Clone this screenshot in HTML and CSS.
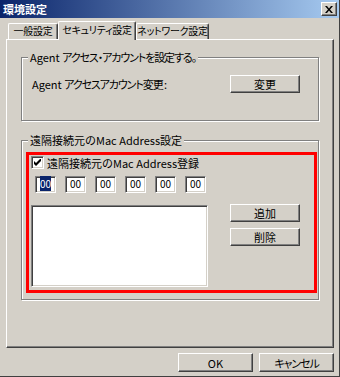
FILE: index.html
```html
<!DOCTYPE html>
<html lang="ja">
<head>
    <meta charset="UTF-8">
    <title>環境設定</title>
    <link rel="stylesheet" href="styles.css">
</head>
<body>
    <div class="window">
        <div class="titlebar">
            <span class="title">環境設定</span>
            <span class="close-btn">
                <svg width="8" height="7" viewBox="0 0 8 7">
                    <path d="M0 0h2l2 2.5L6 0h2L5 3.5 8 7H6L4 4.5 2 7H0l3-3.5z" fill="#000"/>
                </svg>
            </span>
        </div>

        <div class="client">
            <div class="tabs">
                <div class="tab">一般設定</div>
                <div class="tab active">セキュリティ設定</div>
                <div class="tab">ネットワーク設定</div>
            </div>

            <div class="panel">
                <div class="group group-agent">
                    <span class="group-title"><span class="latin">Agent </span><span class="narrow">アクセス・アカウントを設定する。</span></span>
                    <div class="agent-row">
                        <span><span class="latin">Agent </span><span class="narrow">アクセスアカウント変更 :</span></span>
                        <button class="btn btn-change">変更</button>
                    </div>
                </div>

                <div class="group group-mac">
                    <span class="group-title">遠隔接続元のMac Address設定</span>
                    <div class="highlight">
                        <div class="check-row">
                            <span class="checkbox">
                                <svg width="7" height="7" viewBox="0 0 7 7">
                                    <path d="M0 2v3l2 2 5-5V-1L2 4z" fill="#000"/>
                                </svg>
                            </span>
                            <span>遠隔接続元のMac Address登録</span>
                        </div>
                        <div class="mac-row">
                            <div class="mac-field"><span class="selected">00</span></div>
                            <div class="mac-field">00</div>
                            <div class="mac-field">00</div>
                            <div class="mac-field">00</div>
                            <div class="mac-field">00</div>
                            <div class="mac-field">00</div>
                        </div>
                        <div class="list-row">
                            <div class="listbox"></div>
                            <div class="list-buttons">
                                <button class="btn">追加</button>
                                <button class="btn">削除</button>
                            </div>
                        </div>
                    </div>
                </div>
            </div>

            <div class="footer">
                <button class="btn btn-dialog">OK</button>
                <button class="btn btn-dialog narrow">キャンセル</button>
            </div>
        </div>
    </div>
</body>
</html>
```

FILE: styles.css
```css
body {
    margin: 0;
    padding: 0;
    background-color: #d4d0c8;
    font-family: "Noto Sans CJK JP", "Noto Sans", sans-serif;
    font-size: 11px;
    color: #000;
}

/* textos con katakana: mas estrechos */
.narrow {
    font-feature-settings: "palt";
    letter-spacing: -1.1px;
}

.latin {
    letter-spacing: 0;
}

.window {
    width: 340px;
    height: 377px;
    box-sizing: border-box;
    background-color: #d4d0c8;
    border-right: 1px solid #404040;
    border-bottom: 1px solid #404040;
    display: flex;
    flex-direction: column;
}

/* barra de titulo */
.titlebar {
    height: 18px;
    flex-shrink: 0;
    display: flex;
    align-items: center;
    justify-content: space-between;
    padding: 0 2px 0 3px;
    background: linear-gradient(to right, #0a246a, #a6caf0);
}

.titlebar .title {
    color: #fff;
    font-weight: bold;
    font-size: 11px;
    line-height: 14px;
}

.close-btn {
    width: 16px;
    height: 14px;
    box-sizing: border-box;
    display: flex;
    align-items: center;
    justify-content: center;
    background-color: #d4d0c8;
    border-top: 1px solid #fff;
    border-left: 1px solid #fff;
    border-right: 1px solid #404040;
    border-bottom: 1px solid #404040;
    box-shadow: inset -1px -1px 0 #808080;
}

.client {
    flex: 1;
    display: flex;
    flex-direction: column;
    padding: 0 5px 0 6px;
}

/* pestanas */
.tabs {
    display: flex;
    align-items: flex-end;
    padding: 3px 0 0 2px;
    height: 18px;
}

.tab {
    box-sizing: border-box;
    height: 16px;
    font-size: 10px;
    letter-spacing: -0.3px;
    font-feature-settings: "palt";
    line-height: 14px;
    padding: 0;
    white-space: nowrap;
    text-align: center;
    border-top: 1px solid #fff;
    border-left: 1px solid #fff;
    border-right: 1px solid #404040;
    border-radius: 2px 2px 0 0;
    box-shadow: inset -1px 0 0 #808080;
    background-color: #d4d0c8;
}

.tab:nth-child(1) {
    width: 50px;
}

.tab:nth-child(3) {
    width: 73px;
}

.tab.active {
    width: 78px;
    height: 19px;
    line-height: 16px;
    margin-bottom: -1px;
    position: relative;
    z-index: 1;
}

.panel {
    height: 309px;
    box-sizing: border-box;
    border-top: 1px solid #fff;
    border-left: 1px solid #fff;
    border-right: 1px solid #404040;
    border-bottom: 1px solid #404040;
    box-shadow: inset -1px -1px 0 #808080;
    padding: 0 0 0 14px;
    display: flex;
    flex-direction: column;
}

/* marcos de grupo */
.group {
    width: 298px;
    box-sizing: border-box;
    border: 1px solid #808080;
    box-shadow: inset 1px 1px 0 #fff, 1px 1px 0 #fff;
    display: flex;
    flex-direction: column;
}

.group-title {
    align-self: flex-start;
    margin: -8px 0 0 6px;
    padding: 0 2px;
    line-height: 14px;
    background-color: #d4d0c8;
}

.group-agent {
    margin-top: 17px;
    height: 64px;
}

.group-mac {
    margin-top: 19px;
    height: 160px;
}

.agent-row {
    margin-top: 11px;
    padding: 0 18px 0 10px;
    display: flex;
    align-items: center;
    justify-content: space-between;
}

.btn {
    box-sizing: border-box;
    width: 70px;
    height: 18px;
    padding: 0;
    font-family: inherit;
    font-size: 11px;
    line-height: 14px;
    color: #000;
    background-color: #d4d0c8;
    border-top: 1px solid #fff;
    border-left: 1px solid #fff;
    border-right: 1px solid #404040;
    border-bottom: 1px solid #404040;
    border-radius: 0;
    box-shadow: inset -1px -1px 0 #808080;
}

.btn-dialog {
    width: 75px;
    height: 19px;
}

/* recuadro rojo */
.highlight {
    margin: 5px 0 0 4px;
    width: 291px;
    height: 141px;
    box-sizing: border-box;
    border: 3px solid #ff0000;
    display: flex;
    flex-direction: column;
}

.check-row {
    margin-top: 1px;
    padding-left: 2px;
    height: 13px;
    display: flex;
    align-items: center;
    gap: 3px;
    line-height: 14px;
}

.checkbox {
    width: 13px;
    height: 13px;
    box-sizing: border-box;
    display: flex;
    align-items: center;
    justify-content: center;
    background-color: #fff;
    border-top: 1px solid #808080;
    border-left: 1px solid #808080;
    border-right: 1px solid #fff;
    border-bottom: 1px solid #fff;
    box-shadow: inset 1px 1px 0 #404040, inset -1px -1px 0 #d4d0c8;
}

.mac-row {
    margin-top: 7px;
    padding-left: 6px;
    display: flex;
    gap: 9px;
}

.mac-field {
    width: 21px;
    height: 17px;
    box-sizing: border-box;
    font-size: 10px;
    text-align: center;
    line-height: 14px;
    background-color: #fff;
    border-top: 1px solid #808080;
    border-left: 1px solid #808080;
    border-right: 1px solid #fff;
    border-bottom: 1px solid #fff;
    box-shadow: inset 1px 1px 0 #404040, inset -1px -1px 0 #d4d0c8;
}

.mac-field .selected {
    background-color: #0a246a;
    color: #fff;
}

.list-row {
    margin-top: 11px;
    display: flex;
    align-items: flex-start;
}

.listbox {
    margin: 1px 0 0 2px;
    width: 177px;
    height: 82px;
    box-sizing: border-box;
    background-color: #fff;
    border-top: 1px solid #808080;
    border-left: 1px solid #808080;
    border-right: 1px solid #fff;
    border-bottom: 1px solid #fff;
    box-shadow: inset 1px 1px 0 #404040, inset -1px -1px 0 #d4d0c8;
}

.list-buttons {
    margin-left: 22px;
    display: flex;
    flex-direction: column;
    gap: 6px;
}

.footer {
    display: flex;
    justify-content: flex-end;
    gap: 6px;
    padding-top: 5px;
}
```
